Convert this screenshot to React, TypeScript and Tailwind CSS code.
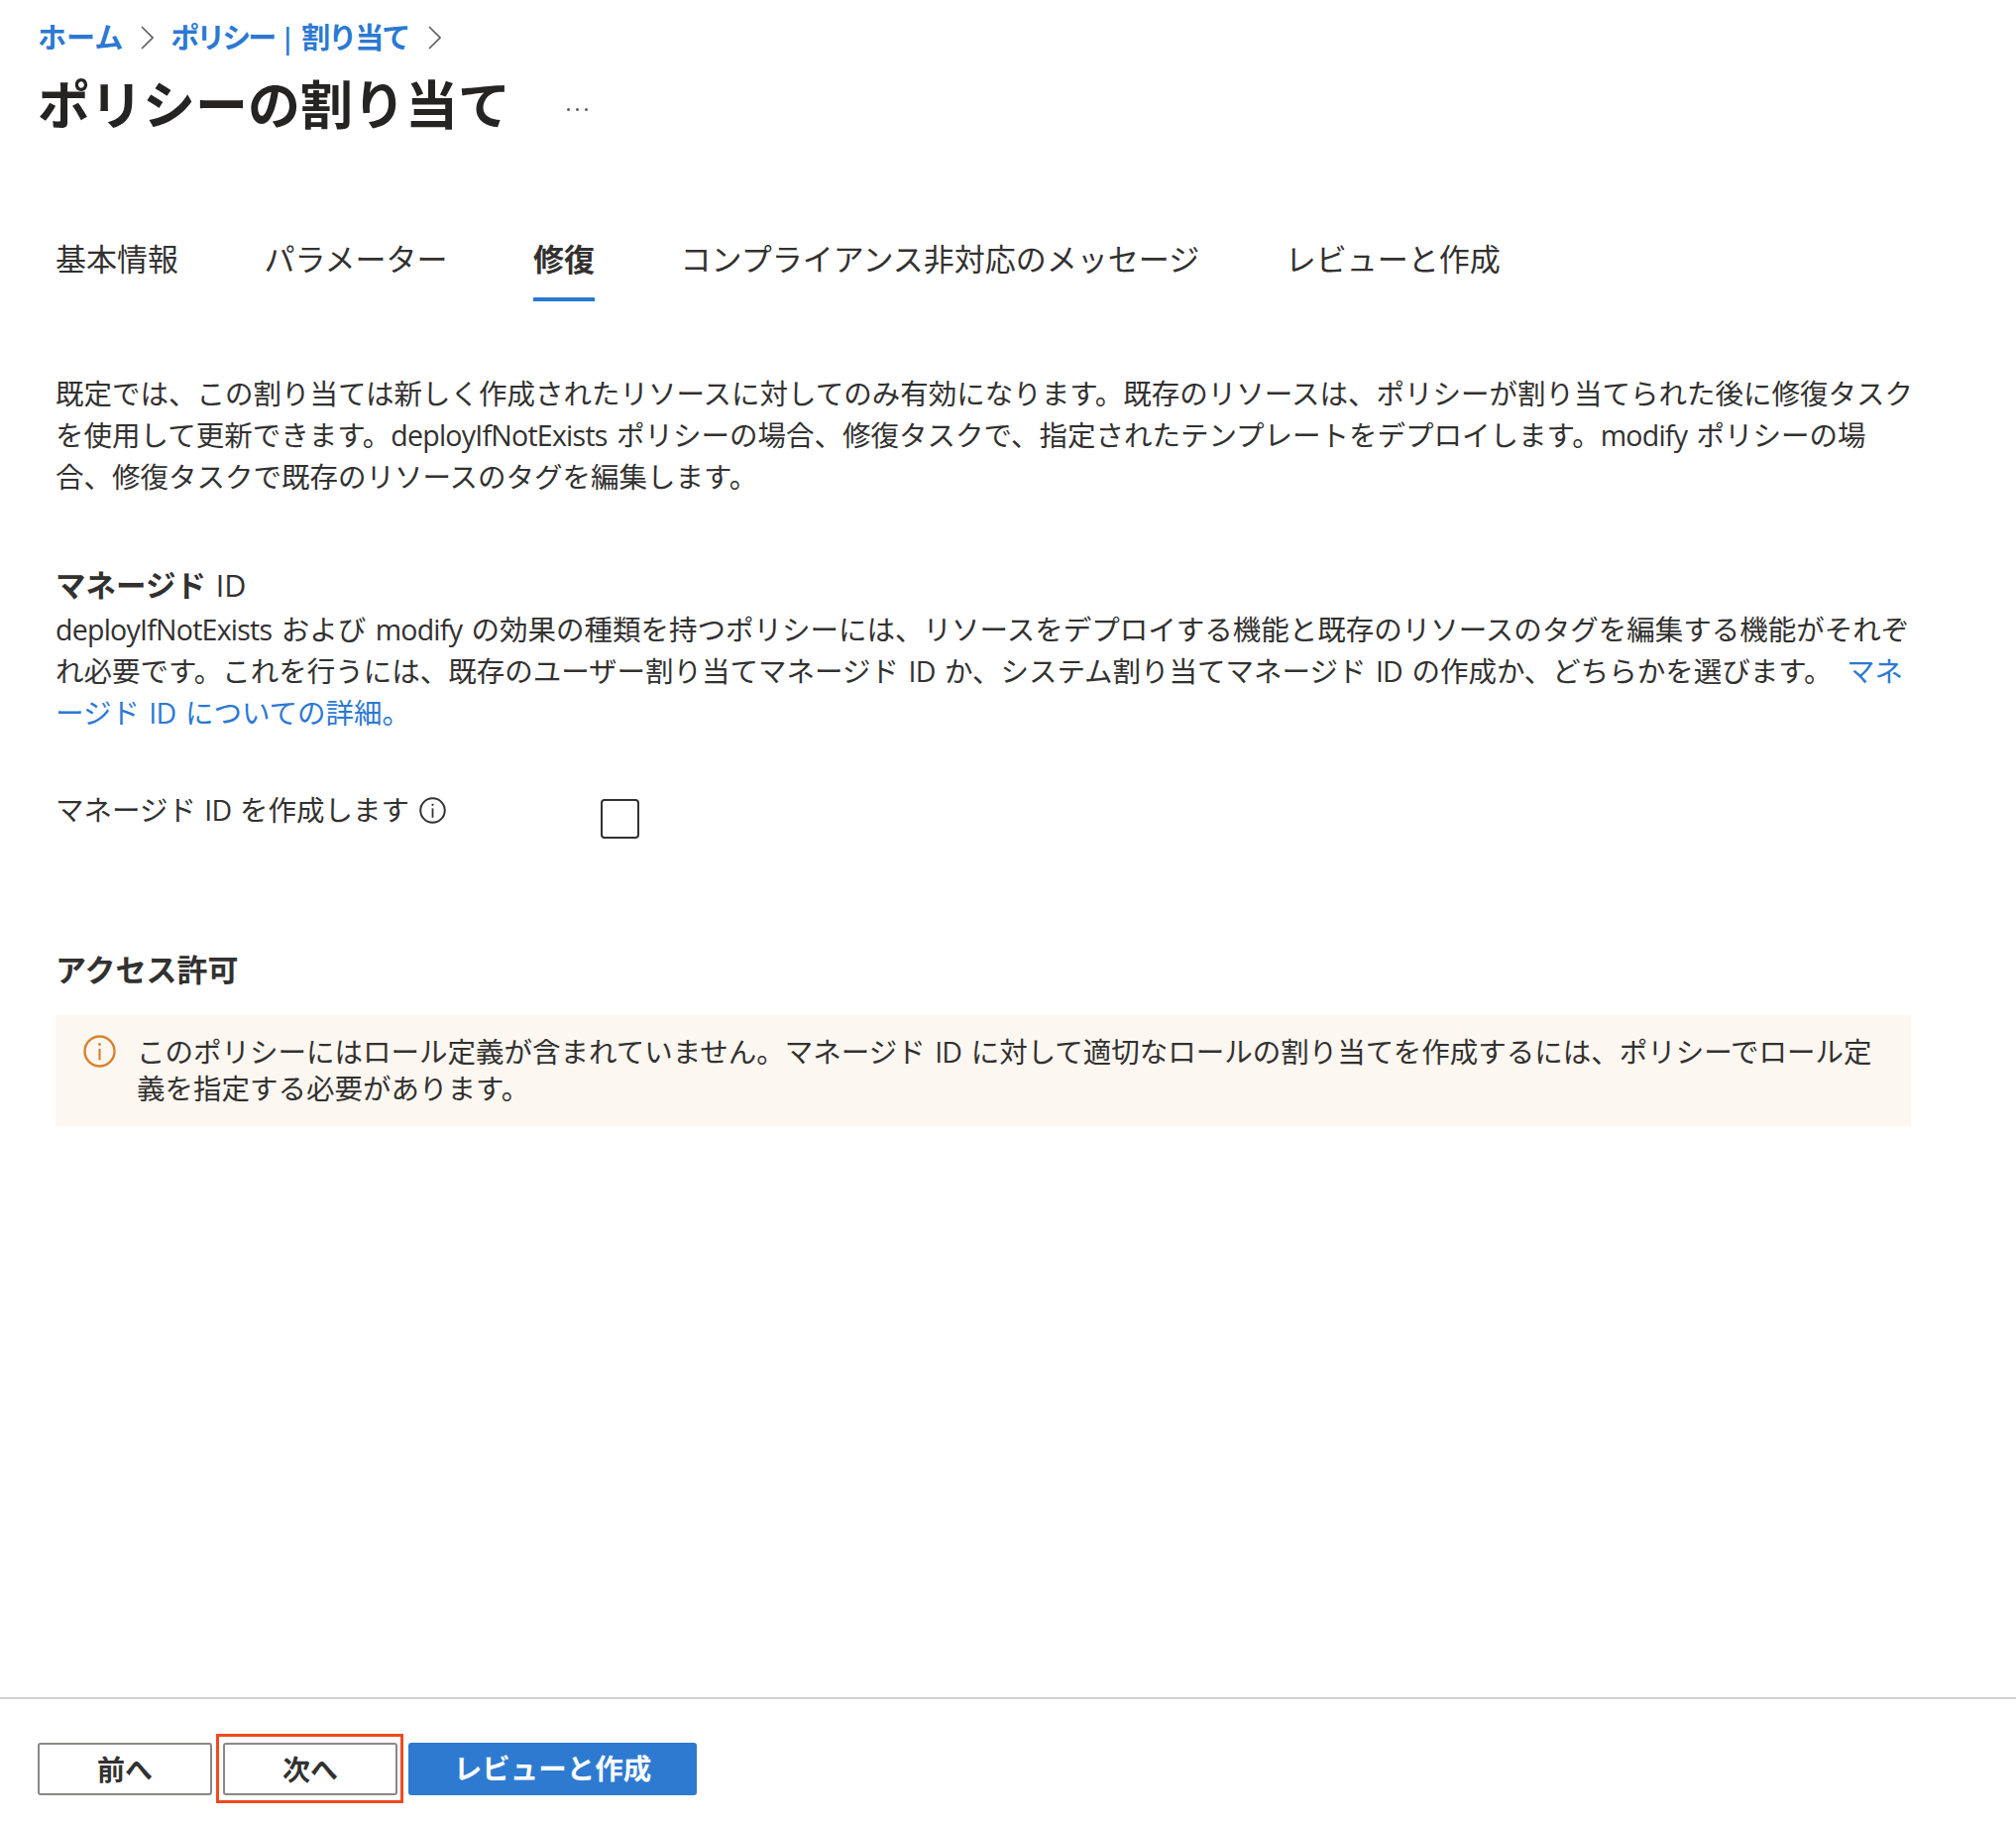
import React from "react";

const font = { fontFamily: '"Open Sans","Noto Sans CJK JP",sans-serif' };

function Chevron() {
  return (
    <svg width="13" height="24" viewBox="0 0 13 24" fill="none" className="shrink-0">
      <path d="M1 1 L12 12 L1 23" stroke="#605e5c" strokeWidth="1.6" />
    </svg>
  );
}

function Info({ size, color }: { size: number; color: string }) {
  return (
    <svg width={size} height={size} viewBox="0 0 26 26" fill="none" className="shrink-0">
      <circle cx="13" cy="13" r="11.8" stroke={color} strokeWidth="1.9" />
      <path d="M13 11 V20" stroke={color} strokeWidth="1.7" />
      <circle cx="13" cy="7.5" r="1.1" fill={color} />
    </svg>
  );
}

function L({ children }: { children: React.ReactNode }) {
  return <span className="tracking-[-0.75px]">{children}</span>;
}

const tabs = ["基本情報", "パラメーター", "修復", "コンプライアンス非対応のメッセージ", "レビューと作成"];

export default function App() {
  return (
    <div style={font} className="flex h-[1840px] w-[2034px] flex-col bg-white text-[#323130]">
      <div className="flex-1">
        <nav className="mt-[18px] flex h-[38px] items-center pl-[38px] pt-[2px] text-[29px] font-semibold text-[#2b79d2]">
          <span>ホーム</span>
          <span className="ml-[18px] mr-[17px]"><Chevron /></span>
          <span>
            <span className="tracking-[-3px]">ポリシー</span>
            <span className="mx-[6px]">|</span>
            <span className="tracking-[-2px]">割り当て</span>
          </span>
          <span className="ml-[20px]"><Chevron /></span>
        </nav>
        <div className="mt-[19px] flex h-[62px] items-center pl-[38px]">
          <h1 className="text-[53px] font-bold leading-[62px] text-[#252423]">ポリシーの割り当て</h1>
          <span className="ml-[57px] mt-[8px] flex gap-[6px]">
            <i className="h-[3px] w-[3px] rounded-full bg-[#605e5c]" />
            <i className="h-[3px] w-[3px] rounded-full bg-[#605e5c]" />
            <i className="h-[3px] w-[3px] rounded-full bg-[#605e5c]" />
          </span>
        </div>

        <div className="mt-[100px] flex gap-[86.5px] pl-[56px] text-[31px]">
          {tabs.map((t) => (
            <div
              key={t}
              className={
                t === "修復"
                  ? "h-[67px] border-b-4 border-[#2b79d2] pt-[3px] font-bold leading-[42px]"
                  : "h-[67px] pt-[3px] leading-[42px]"
              }
            >
              {t}
            </div>
          ))}
        </div>

        <div className="w-[1928px] pl-[56px]">
          <p className="-mr-[5px] mt-[72px] text-[28.5px] leading-[42px] [word-spacing:2px]">
            既定では、この割り当ては新しく作成されたリソースに対してのみ有効になります。既存のリソースは、ポリシーが割り当てられた後に修復タスクを使用して更新できます。<L>deployIfNotExists</L> ポリシーの場合、修復タスクで、指定されたテンプレートをデプロイします。<L>modify</L> ポリシーの場合、修復タスクで既存のリソースのタグを編集します。
          </p>

          <h2 className="mt-[65px] text-[30.5px] font-bold leading-[47px]">マネージド <span className="ml-[2px] font-normal">ID</span></h2>
          <p className="-mr-[5px] text-[28.5px] leading-[42px] [word-spacing:2px]">
            <L>deployIfNotExists</L> および <L>modify</L> の効果の種類を持つポリシーには、リソースをデプロイする機能と既存のリソースのタグを編集する機能がそれぞれ必要です。これを行うには、既存のユーザー割り当てマネージド <L>ID</L> か、システム割り当てマネージド <L>ID</L> の作成か、どちらかを選びます。{" "}
            <a className="ml-[5px] text-[#2b79d2]">マネージド <L>ID</L> についての詳細。</a>
          </p>

          <div className="mt-[56px] flex h-[50px] items-start">
            <div className="flex w-[550px] items-center gap-[10px] text-[28.5px] leading-[42px] [word-spacing:1px]">
              <span>マネージド <L>ID</L> を作成します</span>
              <Info size={27} color="#323130" />
            </div>
            <div className="mt-[10px] h-[40px] w-[39px] rounded-[4px] border-2 border-[#323130]" />
          </div>

          <h2 className="mt-[110px] text-[31px] font-bold leading-[44px]">アクセス許可</h2>
          <div className="mt-[24px] flex h-[112px] gap-[21px] bg-[#fdf7f1] pl-[28px] pr-[30px] pt-[20px]">
            <Info size={33} color="#d9822b" />
            <p className="-mt-[1px] text-[28.5px] leading-[37px] [word-spacing:2px]">
              このポリシーにはロール定義が含まれていません。マネージド <L>ID</L> に対して適切なロールの割り当てを作成するには、ポリシーでロール定義を指定する必要があります。
            </p>
          </div>
        </div>
      </div>

      <footer className="flex h-[128px] items-start gap-[11px] border-t-2 border-[#d2d2d2] pl-[38px] pt-[44px]">
        <button className="h-[53px] w-[176px] rounded-[3px] border-2 border-[#8a8886] bg-white text-[28px] font-bold text-[#323130]">前へ</button>
        <div className="relative">
          <button className="h-[53px] w-[176px] rounded-[3px] border-2 border-[#8a8886] bg-white text-[28px] font-bold text-[#323130]">次へ</button>
          <div className="absolute -bottom-[8px] -left-[7px] -right-[6px] -top-[9px] border-[3.5px] border-[#f04a1e]" />
        </div>
        <button className="h-[53px] w-[291px] rounded-[3px] bg-[#2e7ad1] text-[28.5px] font-bold text-white">レビューと作成</button>
      </footer>
    </div>
  );
}
